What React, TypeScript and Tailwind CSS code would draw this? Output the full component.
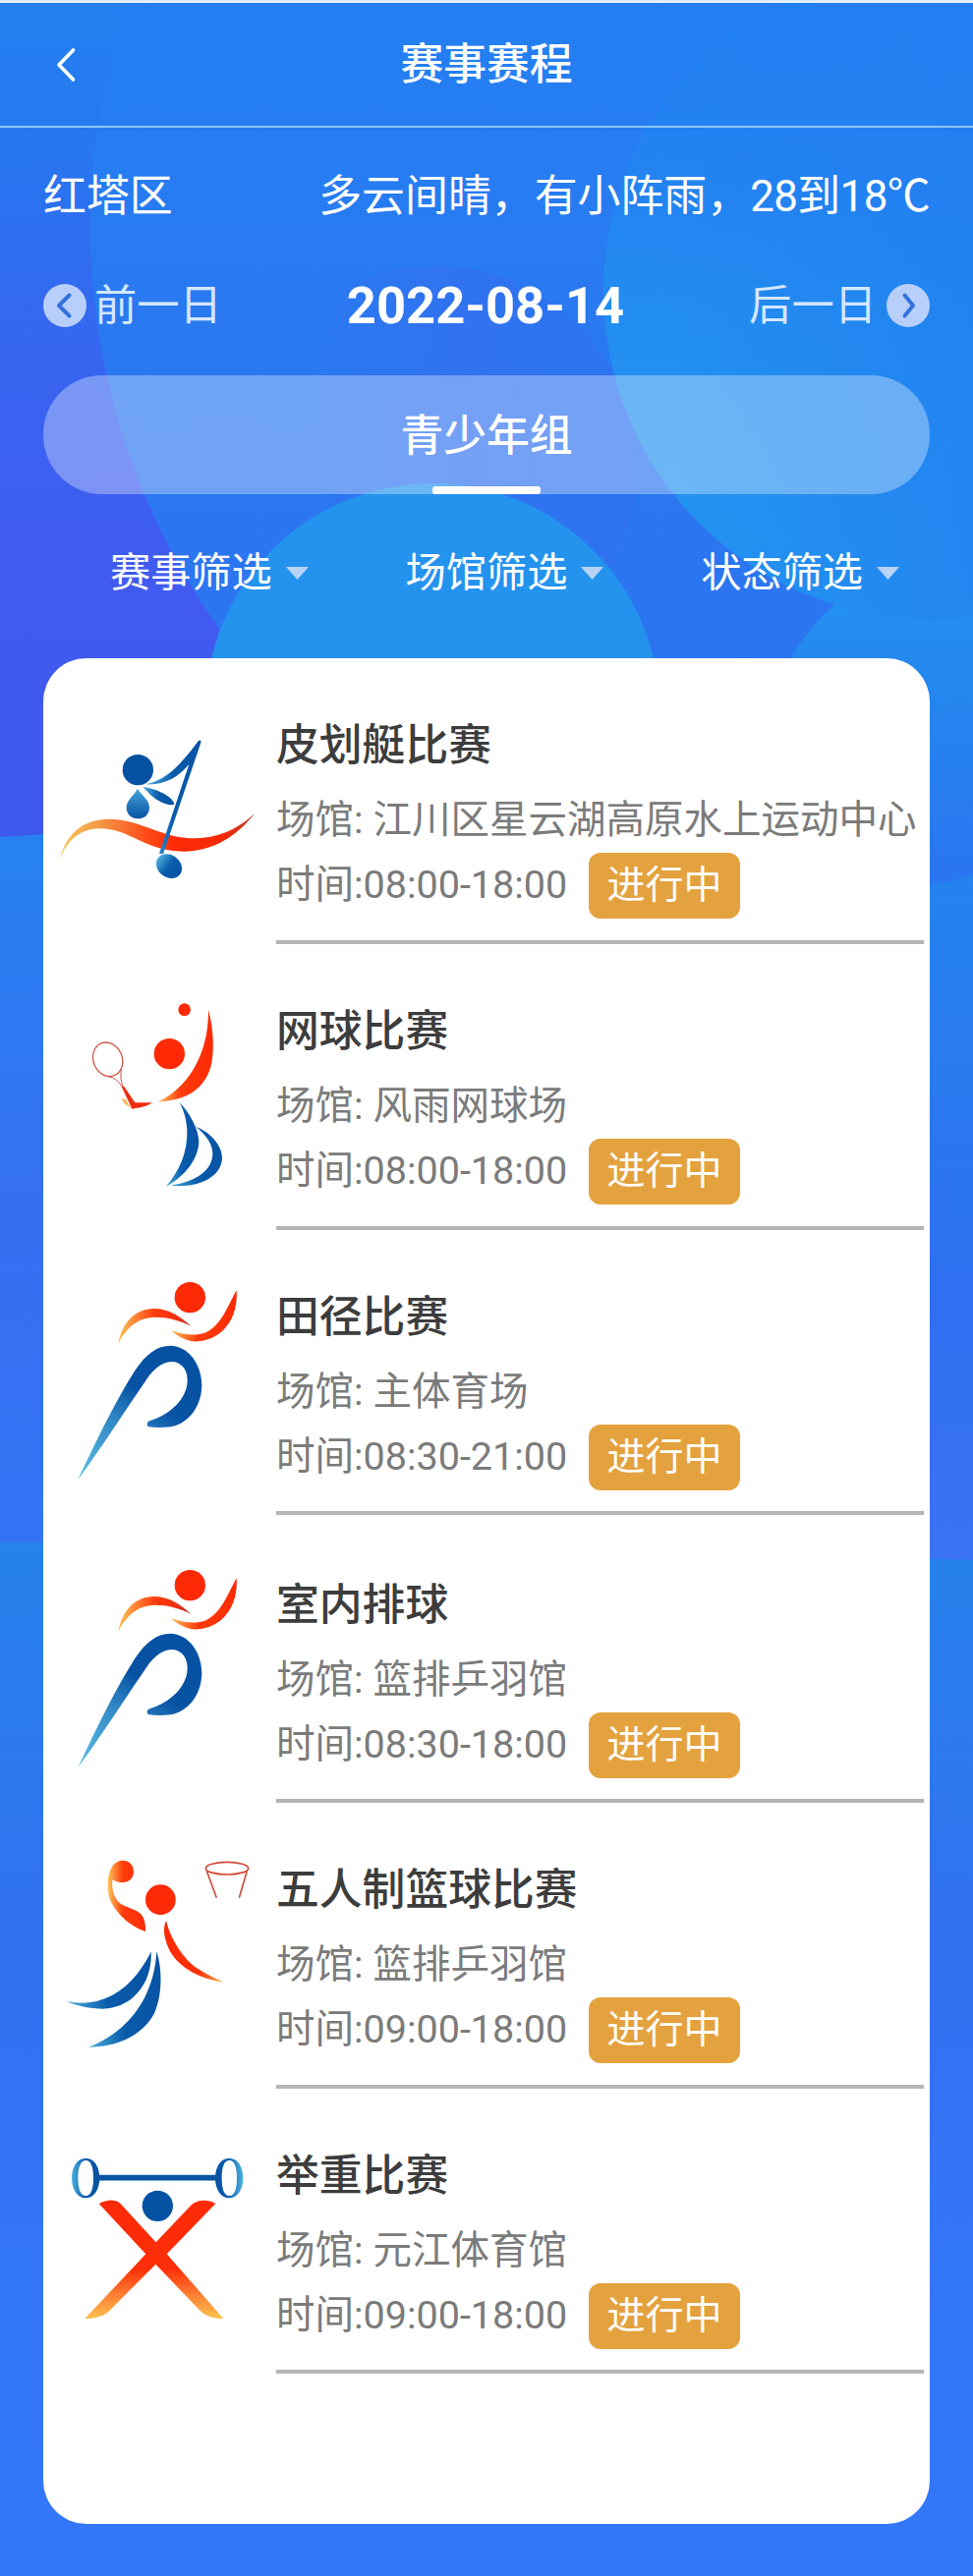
import React from 'react';

type Sport = 'canoe' | 'tennis' | 'run' | 'basketball' | 'weight';

interface Match {
  id: number;
  title: string;
  venue: string;
  time: string;
  sport: Sport;
}

const matches: Match[] = [
  { id: 1, title: '皮划艇比赛', venue: '江川区星云湖高原水上运动中心', time: '08:00-18:00', sport: 'canoe' },
  { id: 2, title: '网球比赛', venue: '风雨网球场', time: '08:00-18:00', sport: 'tennis' },
  { id: 3, title: '田径比赛', venue: '主体育场', time: '08:30-21:00', sport: 'run' },
  { id: 4, title: '室内排球', venue: '篮排乒羽馆', time: '08:30-18:00', sport: 'run' },
  { id: 5, title: '五人制篮球比赛', venue: '篮排乒羽馆', time: '09:00-18:00', sport: 'basketball' },
  { id: 6, title: '举重比赛', venue: '元江体育馆', time: '09:00-18:00', sport: 'weight' },
];

const filters = ['赛事筛选', '场馆筛选', '状态筛选'];

const Backdrop: React.FC = () => (
  <svg className="absolute inset-0 h-full w-full" viewBox="0 0 990 2622" aria-hidden="true">
    <defs>
      <linearGradient id="left" x1="0" y1="0" x2="0" y2="1">
        <stop offset="0" stopColor="#2380f0" />
        <stop offset="0.15" stopColor="#2679f0" />
        <stop offset="0.27" stopColor="#2d6ff0" />
        <stop offset="0.42" stopColor="#3766f0" />
        <stop offset="0.7" stopColor="#415af0" />
        <stop offset="1" stopColor="#3f58ec" />
      </linearGradient>
      <linearGradient id="big" x1="0" y1="0" x2="0" y2="850" gradientUnits="userSpaceOnUse">
        <stop offset="0" stopColor="#2380f2" />
        <stop offset="0.4" stopColor="#2a79f0" />
        <stop offset="1" stopColor="#2d72f1" />
      </linearGradient>
      <linearGradient id="right" x1="0" y1="0" x2="0" y2="630" gradientUnits="userSpaceOnUse">
        <stop offset="0" stopColor="#2380f2" />
        <stop offset="0.3" stopColor="#2383f1" />
        <stop offset="0.5" stopColor="#228df1" />
        <stop offset="1" stopColor="#2396f0" />
      </linearGradient>
      <linearGradient id="shade" x1="615" y1="0" x2="990" y2="0" gradientUnits="userSpaceOnUse">
        <stop offset="0.2" stopColor="#227ef0" stopOpacity="0" />
        <stop offset="1" stopColor="#227ef0" stopOpacity="0.65" />
      </linearGradient>
      <linearGradient id="violet" x1="0.2" y1="0" x2="0.8" y2="0">
        <stop offset="0" stopColor="#3a6aef" stopOpacity="0" />
        <stop offset="0.6" stopColor="#3a6aef" stopOpacity="0.45" />
        <stop offset="1" stopColor="#3070f0" stopOpacity="0.6" />
      </linearGradient>
      <linearGradient id="corner" x1="0" y1="560" x2="0" y2="930" gradientUnits="userSpaceOnUse">
        <stop offset="0" stopColor="#2196f1" />
        <stop offset="0.3" stopColor="#2489ef" />
        <stop offset="1" stopColor="#2b72f0" />
      </linearGradient>
      <linearGradient id="lowL" x1="0" y1="0" x2="0" y2="1">
        <stop offset="0" stopColor="#2682f1" />
        <stop offset="0.55" stopColor="#376ff1" />
        <stop offset="1" stopColor="#3474f4" />
      </linearGradient>
      <linearGradient id="lowR" x1="0" y1="0" x2="0" y2="1">
        <stop offset="0" stopColor="#2483ee" />
        <stop offset="0.6" stopColor="#2f70f0" />
        <stop offset="1" stopColor="#3a72f2" />
      </linearGradient>
      <linearGradient id="end" x1="0" y1="0" x2="0" y2="1">
        <stop offset="0" stopColor="#2682ec" />
        <stop offset="0.4" stopColor="#3370f0" />
        <stop offset="0.75" stopColor="#3376f8" />
        <stop offset="1" stopColor="#3378f8" />
      </linearGradient>
    </defs>
    <rect width="990" height="860" fill="url(#left)" />
    <circle cx="800" cy="230" r="708" fill="url(#big)" />
    <circle cx="442" cy="476" r="206" fill="url(#violet)" />
    <circle cx="995" cy="780" r="220" fill="url(#corner)" />
    <circle cx="947" cy="297" r="333" fill="url(#right)" />
    <circle cx="947" cy="297" r="333" fill="url(#shade)" />
    <circle cx="440" cy="723" r="231" fill="#2493ee" />
    <path d="M0 852L60 848V1570H0Z" fill="url(#lowL)" />
    <path d="M930 905L990 891V1590H930Z" fill="url(#lowR)" />
    <path d="M0 1570H500L990 1588V2622H0Z" fill="url(#end)" />
  </svg>
);

const IconDefs: React.FC = () => (
  <svg width="0" height="0" className="absolute" aria-hidden="true">
    <defs>
      <linearGradient id="wave">
        <stop offset="0" stopColor="#fbc75a" />
        <stop offset="0.18" stopColor="#f2a04a" />
        <stop offset="0.45" stopColor="#ff4a18" />
        <stop offset="0.6" stopColor="#fd2a05" />
        <stop offset="0.85" stopColor="#f52a08" />
        <stop offset="1" stopColor="#b83a28" />
      </linearGradient>
      <linearGradient id="fire">
        <stop offset="0" stopColor="#fbc55c" />
        <stop offset="0.4" stopColor="#ff3c0c" />
        <stop offset="1" stopColor="#fd2a05" />
      </linearGradient>
      <linearGradient id="fireArc">
        <stop offset="0" stopColor="#fbc55c" />
        <stop offset="0.5" stopColor="#ff3c0c" />
        <stop offset="0.8" stopColor="#f03010" />
        <stop offset="1" stopColor="#a83a30" />
      </linearGradient>
      <linearGradient id="fireRev">
        <stop offset="0" stopColor="#fd2a05" />
        <stop offset="0.6" stopColor="#fd3208" />
        <stop offset="1" stopColor="#f0c050" />
      </linearGradient>
      <linearGradient id="fireDown" x1="0" y1="0" x2="0" y2="1">
        <stop offset="0" stopColor="#fd2a05" />
        <stop offset="0.58" stopColor="#fd2f08" />
        <stop offset="0.8" stopColor="#fb8034" />
        <stop offset="1" stopColor="#fcc24e" />
      </linearGradient>
      <linearGradient id="sea">
        <stop offset="0" stopColor="#4db0de" />
        <stop offset="0.5" stopColor="#0a5cab" />
        <stop offset="1" stopColor="#0752a3" />
      </linearGradient>
      <linearGradient id="seaRev">
        <stop offset="0" stopColor="#0752a3" />
        <stop offset="0.4" stopColor="#0a5cab" />
        <stop offset="1" stopColor="#4db0de" />
      </linearGradient>
      <linearGradient id="drop" x1="0" y1="0" x2="0" y2="1">
        <stop offset="0" stopColor="#45a6da" />
        <stop offset="1" stopColor="#0752a3" />
      </linearGradient>
      <linearGradient id="leg" x1="60" y1="645" x2="330" y2="250" gradientUnits="userSpaceOnUse">
        <stop offset="0" stopColor="#5ec0e6" />
        <stop offset="0.45" stopColor="#2f86c4" />
        <stop offset="0.68" stopColor="#0752a3" />
      </linearGradient>
    </defs>
  </svg>
);

const SportIcon: React.FC<{ sport: Sport }> = ({ sport }) => (
  <svg className="h-[290px] w-[237px] shrink-0" viewBox="0 0 711 870" fill="none">
    {sport === 'canoe' && (
      <g transform="translate(-12 150)">
        <path d="M62 464C82 385 135 340 215 341C310 343 375 400 475 400C545 400 610 370 657 324C600 400 520 441 440 440C320 438 275 370 185 370C125 370 86 405 62 464Z" fill="url(#wave)" />
        <circle cx="301" cy="191" r="47" fill="#0552a3" />
        <path d="M300 248C310 268 336 280 336 306C336 328 320 340 301 340C281 340 266 326 266 306C266 282 289 270 300 248Z" fill="url(#drop)" />
        <path d="M316 243C355 247 408 272 412 295C406 304 370 292 350 276C336 265 325 252 316 243Z" fill="url(#sea)" />
        <path d="M323 235C395 222 440 162 486 102C491 98 495 101 493 108L378 448L366 446L457 174C425 212 385 238 323 235Z" fill="url(#sea)" />
        <ellipse cx="396" cy="485" rx="42" ry="34" transform="rotate(38 396 485)" fill="url(#sea)" />
      </g>
    )}
    {sport === 'tennis' && (
      <g transform="translate(48 117)">
        <circle cx="383" cy="83" r="19" fill="#fd2a05" />
        <circle cx="337" cy="218" r="47" fill="#fd2a05" />
        <path d="M456 84C471 135 477 215 462 262C436 340 370 362 302 364C382 330 458 230 456 84Z" fill="url(#fire)" />
        <ellipse cx="149" cy="235" rx="44" ry="53" transform="rotate(-22 149 235)" stroke="#cf5a50" strokeWidth="4" />
        <path d="M150 287Q178 292 192 318M190 266Q185 292 194 316" stroke="#cf5a50" strokeWidth="3" />
        <path d="M190 354L204 357L212 372L222 386L200 370Z" fill="#f8b860" />
        <path d="M190 316L199 318L232 367L285 367C270 378 245 384 223 386Z" fill="#ee2c12" />
        <path d="M368 366C400 400 428 450 427 490C423 548 375 598 326 624C368 575 393 520 391 450C389 415 380 390 368 366Z" fill="url(#sea)" />
        <path d="M417 440C465 458 500 500 498 540C491 602 415 628 340 620C410 610 470 578 469 520C468 490 445 462 417 440Z" fill="url(#sea)" />
      </g>
    )}
    {sport === 'run' && (
      <g transform="translate(48 114)">
        <circle cx="400" cy="92" r="47" fill="#fd2a05" />
        <path d="M181 231C193 170 230 127 290 126C335 126 372 150 403 180C365 160 320 150 282 153C235 158 208 185 181 231Z" fill="url(#fireArc)" />
        <path d="M542 70C548 155 500 220 425 226C390 228 360 210 341 192C385 208 420 208 445 200C495 180 515 118 542 70Z" fill="url(#fire)" />
        <path d="M58 648C100 560 165 420 232 315C265 265 300 239 340 239C395 240 435 295 436 358C436 430 390 480 340 487C315 490 295 490 275 487C266 484 267 474 276 469C340 450 392 400 392 345C392 310 372 288 342 288C315 290 290 310 270 338C210 425 120 565 58 648Z" fill="url(#leg)" />
      </g>
    )}
    {sport === 'basketball' && (
      <g transform="translate(48 105)">
        <path d="M194 71C214 71 228 85 228 105C228 125 214 138 194 138C181 138 170 135 163 128C160 160 168 188 190 205C215 218 240 222 253 238C262 252 265 270 264 288C222 275 178 238 158 196C140 150 148 71 194 71Z" fill="url(#fire)" />
        <circle cx="310" cy="191" r="46" fill="#fd2a05" />
        <path d="M327 254C338 300 365 350 405 388C435 412 470 428 504 443C430 432 370 400 340 350C320 310 316 280 327 254Z" fill="url(#fireRev)" />
        <ellipse cx="513" cy="95" rx="65" ry="19" stroke="#d2493a" strokeWidth="5" />
        <path d="M451 103L481 185M574 103L550 185" stroke="#c8503f" strokeWidth="5" />
        <path d="M281 350C286 440 230 520 135 524C95 524 50 514 20 501C140 525 225 460 281 350Z" fill="url(#sea)" />
        <path d="M298 349C315 400 317 480 290 540C250 610 175 640 90 641C200 600 290 500 298 349Z" fill="url(#sea)" />
      </g>
    )}
    {sport === 'weight' && (
      <g transform="translate(48 162)">
        <path d="M118 110H483" stroke="#0b55a5" strokeWidth="17" />
        <path fillRule="evenodd" d="M82 50C107 50 124 76 124 111C124 146 107 172 82 172C56 172 39 146 39 111C39 76 56 50 82 50ZM82 57C66 57 58 78 58 111C58 144 66 165 82 165C98 165 105 144 105 111C105 78 98 57 82 57Z" fill="url(#sea)" />
        <path fillRule="evenodd" d="M520 50C545 50 562 76 562 111C562 146 545 172 520 172C494 172 477 146 477 111C477 76 494 50 520 50ZM520 57C504 57 497 78 497 111C497 144 504 165 520 165C536 165 543 144 543 111C543 78 536 57 520 57Z" fill="url(#seaRev)" />
        <circle cx="301" cy="196" r="47" fill="#0552a3" />
        <path d="M122 189C145 177 170 174 187 188L296 307L400 197C420 175 455 175 478 189L329 343L502 540C475 541 448 533 430 515L295 374L160 510C140 534 108 541 79 540L265 343Z" fill="url(#fireDown)" />
      </g>
    )}
  </svg>
);

const DayArrow: React.FC<{ next?: boolean }> = ({ next }) => (
  <svg className="h-11 w-11" viewBox="0 0 44 44" fill="none">
    <circle cx="22" cy="22" r="22" fill="#b9cffb" />
    <path
      d={next ? 'M18.5 11.5L27 22L18.5 32.5' : 'M26.5 11.5L16 22L26.5 32.5'}
      stroke="#3472dc"
      strokeWidth="4"
      strokeLinecap="round"
      strokeLinejoin="round"
    />
  </svg>
);

const MatchItem: React.FC<{ match: Match }> = ({ match }) => (
  <li className={`flex ${match.id === 4 ? 'h-[293px] pt-[3px]' : match.id === 3 || match.id === 6 ? 'h-[290px]' : 'h-[291px]'}`}>
    <SportIcon sport={match.sport} />
    <div className="mr-[6px] flex flex-1 flex-col border-b-4 border-[#b5b5b5] pt-[60px] text-[39.5px] text-[#7b7b7b]">
      <h2 className="flex h-[60px] items-center text-[43.8px] font-medium whitespace-nowrap text-[#3d3d3d]">{match.title}</h2>
      <p className="mt-3 flex h-[66px] items-center whitespace-pre">场馆: {match.venue}</p>
      <div className="flex h-[66px] items-center whitespace-nowrap">
        <span className="w-[318px]">时间:{match.time}</span>
        <span className="flex h-[67px] w-[154px] items-center justify-center rounded-xl bg-[#e4a23e] text-[39px] text-white">进行中</span>
      </div>
    </div>
  </li>
);

const App: React.FC = () => (
  <div className="relative h-[2622px] w-[990px] overflow-hidden bg-[#3378f8] font-['Roboto','Noto_Sans_CJK_SC',sans-serif] text-white">
    <Backdrop />
    <IconDefs />
    <div className="relative flex flex-col">
      <header className="flex h-[130px] items-center border-t-[3px] border-b-2 border-t-[#e4effc] border-b-[#8fc4f8] px-[56px]">
        <button className="w-[40px]">
          <svg className="h-[36px] w-[22px]" viewBox="0 0 22 36" fill="none">
            <path d="M18.5 3L4 18L18.5 33" stroke="white" strokeWidth="3.6" strokeLinecap="round" strokeLinejoin="round" />
          </svg>
        </button>
        <h1 className="flex-1 pt-[3px] pr-[40px] text-center text-[43.8px] font-medium">赛事赛程</h1>
      </header>

      <div className="mt-[38px] flex h-[66px] items-center justify-between px-[44px] text-[43.9px]">
        <span>红塔区</span>
        <span>
          多云间晴，有小阵雨，<span className="tracking-[-0.6px]">28到18℃</span>
        </span>
      </div>

      <div className="mt-[46px] flex h-[62px] items-center justify-between px-[44px] text-[43.3px] text-[#d5e7fd]">
        <button className="flex items-center gap-2">
          <DayArrow />
          <span className="pt-[2px]">前一日</span>
        </button>
        <span className="text-[52.5px] font-bold text-white">2022-08-14</span>
        <button className="flex items-center gap-[10px]">
          <span className="pt-[2px]">后一日</span>
          <DayArrow next />
        </button>
      </div>

      <div className="mx-[44px] mt-[40px] flex h-[121px] flex-col items-center rounded-[60px] bg-white/33">
        <span className="flex h-[113px] items-center pt-[12px] text-[43.8px] font-medium">青少年组</span>
        <span className="h-2 w-[110px] rounded-[3px] bg-white" />
      </div>

      <div className="mx-[44px] mt-[50px] grid h-[60px] grid-cols-3 items-center text-[41.2px]">
        {filters.map((name) => (
          <button key={name} className="flex items-center justify-center gap-[14px] pl-[37px]">
            {name}
            <svg className="h-[13px] w-[23px]" viewBox="0 0 23 13">
              <path d="M0 0H23L11.5 13Z" fill="#b9d3f6" />
            </svg>
          </button>
        ))}
      </div>

      <ul className="mx-[44px] mt-[57px] h-[1899px] rounded-[44px] bg-white">
        {matches.map((match) => (
          <MatchItem key={match.id} match={match} />
        ))}
      </ul>
    </div>
  </div>
);

export default App;
